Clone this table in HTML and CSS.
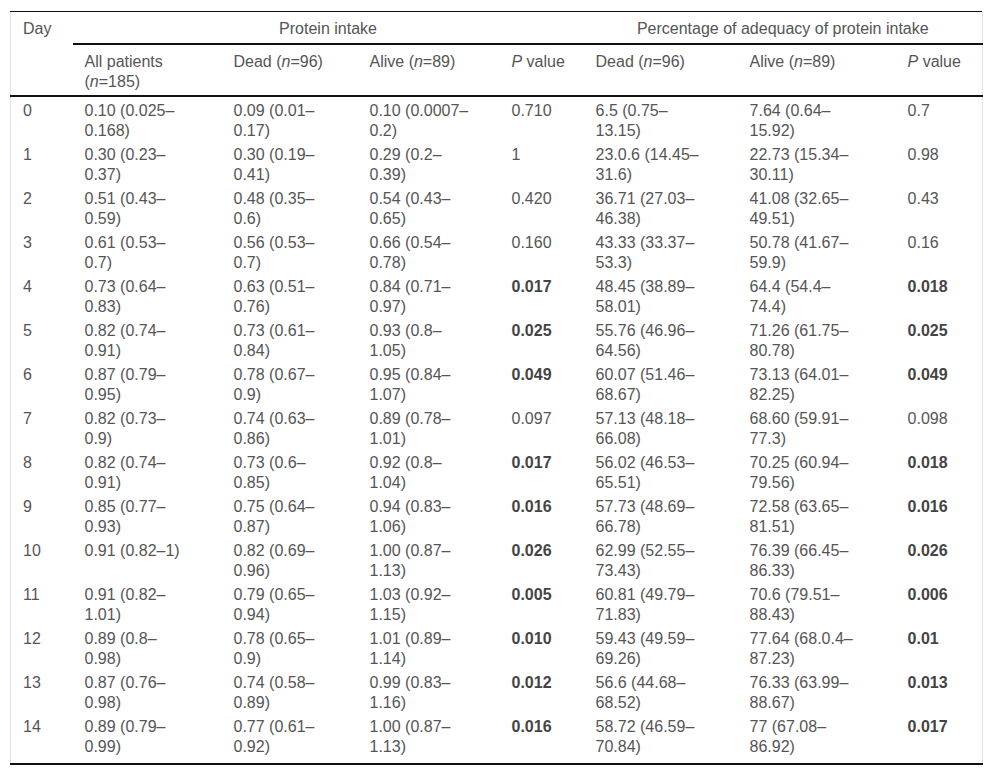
FILE: index.html
```html
<!DOCTYPE html>
<html>
<head>
<meta charset="utf-8">
<link rel="stylesheet" href="styles.css">
</head>
<body>
<div class="wrap">
<table class="tbl">
<colgroup>
<col class="c1"><col class="c2"><col class="c3"><col class="c4"><col class="c5"><col class="c6"><col class="c7"><col class="c8">
</colgroup>
<thead>
<tr class="h1">
<th rowspan="2" class="day">Day</th>
<th colspan="4" class="grp">Protein intake</th>
<th colspan="3" class="grp">Percentage of adequacy of protein intake</th>
</tr>
<tr class="h2">
<th><div class="v">All patients (<i>n</i>=185)</div></th>
<th><div class="v">Dead (<i>n</i>=96)</div></th>
<th><div class="v">Alive (<i>n</i>=89)</div></th>
<th><div class="v"><i>P</i> value</div></th>
<th><div class="v">Dead (<i>n</i>=96)</div></th>
<th><div class="v">Alive (<i>n</i>=89)</div></th>
<th><div class="v"><i>P</i> value</div></th>
</tr>
</thead>
<tbody>
<tr><td>0</td><td><div class="v">0.10 (0.025–0.168)</div></td><td><div class="v">0.09 (0.01–0.17)</div></td><td><div class="v">0.10 (0.0007–0.2)</div></td><td>0.710</td><td><div class="v">6.5 (0.75–13.15)</div></td><td><div class="v">7.64 (0.64–15.92)</div></td><td>0.7</td></tr>
<tr><td>1</td><td><div class="v">0.30 (0.23–0.37)</div></td><td><div class="v">0.30 (0.19–0.41)</div></td><td><div class="v">0.29 (0.2–0.39)</div></td><td>1</td><td><div class="v">23.0.6 (14.45–31.6)</div></td><td><div class="v">22.73 (15.34–30.11)</div></td><td>0.98</td></tr>
<tr><td>2</td><td><div class="v">0.51 (0.43–0.59)</div></td><td><div class="v">0.48 (0.35–0.6)</div></td><td><div class="v">0.54 (0.43–0.65)</div></td><td>0.420</td><td><div class="v">36.71 (27.03–46.38)</div></td><td><div class="v">41.08 (32.65–49.51)</div></td><td>0.43</td></tr>
<tr><td>3</td><td><div class="v">0.61 (0.53–0.7)</div></td><td><div class="v">0.56 (0.53–0.7)</div></td><td><div class="v">0.66 (0.54–0.78)</div></td><td>0.160</td><td><div class="v">43.33 (33.37–53.3)</div></td><td><div class="v">50.78 (41.67–59.9)</div></td><td>0.16</td></tr>
<tr><td>4</td><td><div class="v">0.73 (0.64–0.83)</div></td><td><div class="v">0.63 (0.51–0.76)</div></td><td><div class="v">0.84 (0.71–0.97)</div></td><td><b>0.017</b></td><td><div class="v">48.45 (38.89–58.01)</div></td><td><div class="v">64.4 (54.4–74.4)</div></td><td><b>0.018</b></td></tr>
<tr><td>5</td><td><div class="v">0.82 (0.74–0.91)</div></td><td><div class="v">0.73 (0.61–0.84)</div></td><td><div class="v">0.93 (0.8–1.05)</div></td><td><b>0.025</b></td><td><div class="v">55.76 (46.96–64.56)</div></td><td><div class="v">71.26 (61.75–80.78)</div></td><td><b>0.025</b></td></tr>
<tr><td>6</td><td><div class="v">0.87 (0.79–0.95)</div></td><td><div class="v">0.78 (0.67–0.9)</div></td><td><div class="v">0.95 (0.84–1.07)</div></td><td><b>0.049</b></td><td><div class="v">60.07 (51.46–68.67)</div></td><td><div class="v">73.13 (64.01–82.25)</div></td><td><b>0.049</b></td></tr>
<tr><td>7</td><td><div class="v">0.82 (0.73–0.9)</div></td><td><div class="v">0.74 (0.63–0.86)</div></td><td><div class="v">0.89 (0.78–1.01)</div></td><td>0.097</td><td><div class="v">57.13 (48.18–66.08)</div></td><td><div class="v">68.60 (59.91–77.3)</div></td><td>0.098</td></tr>
<tr><td>8</td><td><div class="v">0.82 (0.74–0.91)</div></td><td><div class="v">0.73 (0.6–0.85)</div></td><td><div class="v">0.92 (0.8–1.04)</div></td><td><b>0.017</b></td><td><div class="v">56.02 (46.53–65.51)</div></td><td><div class="v">70.25 (60.94–79.56)</div></td><td><b>0.018</b></td></tr>
<tr><td>9</td><td><div class="v">0.85 (0.77–0.93)</div></td><td><div class="v">0.75 (0.64–0.87)</div></td><td><div class="v">0.94 (0.83–1.06)</div></td><td><b>0.016</b></td><td><div class="v">57.73 (48.69–66.78)</div></td><td><div class="v">72.58 (63.65–81.51)</div></td><td><b>0.016</b></td></tr>
<tr><td>10</td><td><div class="v">0.91 (0.82–1)</div></td><td><div class="v">0.82 (0.69–0.96)</div></td><td><div class="v">1.00 (0.87–1.13)</div></td><td><b>0.026</b></td><td><div class="v">62.99 (52.55–73.43)</div></td><td><div class="v">76.39 (66.45–86.33)</div></td><td><b>0.026</b></td></tr>
<tr><td>11</td><td><div class="v">0.91 (0.82–1.01)</div></td><td><div class="v">0.79 (0.65–0.94)</div></td><td><div class="v">1.03 (0.92–1.15)</div></td><td><b>0.005</b></td><td><div class="v">60.81 (49.79–71.83)</div></td><td><div class="v">70.6 (79.51–88.43)</div></td><td><b>0.006</b></td></tr>
<tr><td>12</td><td><div class="v">0.89 (0.8–0.98)</div></td><td><div class="v">0.78 (0.65–0.9)</div></td><td><div class="v">1.01 (0.89–1.14)</div></td><td><b>0.010</b></td><td><div class="v">59.43 (49.59–69.26)</div></td><td><div class="v">77.64 (68.0.4–87.23)</div></td><td><b>0.01</b></td></tr>
<tr><td>13</td><td><div class="v">0.87 (0.76–0.98)</div></td><td><div class="v">0.74 (0.58–0.89)</div></td><td><div class="v">0.99 (0.83–1.16)</div></td><td><b>0.012</b></td><td><div class="v">56.6 (44.68–68.52)</div></td><td><div class="v">76.33 (63.99–88.67)</div></td><td><b>0.013</b></td></tr>
<tr><td>14</td><td><div class="v">0.89 (0.79–0.99)</div></td><td><div class="v">0.77 (0.61–0.92)</div></td><td><div class="v">1.00 (0.87–1.13)</div></td><td><b>0.016</b></td><td><div class="v">58.72 (46.59–70.84)</div></td><td><div class="v">77 (67.08–86.92)</div></td><td><b>0.017</b></td></tr>
</tbody>
</table>
</div>
</body>
</html>
```
FILE: styles.css
```css
html, body {
  margin: 0;
  padding: 0;
  background: #fff;
}
.wrap {
  padding: 11px 0 0 10px;
}
.tbl {
  width: 972px;
  table-layout: fixed;
  border-collapse: collapse;
  font-family: "Liberation Sans", Arial, sans-serif;
  font-size: 16px;
  line-height: 20px;
  color: #555;
  border-left: 1px solid #e2e2e2;
  border-right: 1px solid #e2e2e2;
  border-top: 1px solid #111;
  border-bottom: 2px solid #111;
}
.c1 { width: 62px; }
.c2 { width: 149px; }
.c3 { width: 136px; }
.c4 { width: 142px; }
.c5 { width: 84px; }
.c6 { width: 154px; }
.c7 { width: 158px; }
.c8 { width: 87px; }
.tbl th {
  font-weight: normal;
  text-align: left;
  vertical-align: top;
  padding: 7px 12px 3px 12px;
}
.h1 th {
  padding: 7px 12px 4px 12px;
}
.h1 .grp {
  text-align: center;
  border-bottom: 2px solid #111;
}
.h2 th {
  border-bottom: 2px solid #111;
  height: 40px;
}
.h1 .day {
  border-bottom: 2px solid #111;
}
.tbl td {
  vertical-align: top;
  padding: 2px 12px 2px 12px;
  height: 40px;
}
.tbl tbody tr:first-child td {
  padding-top: 4px;
}
.tbl tbody tr:last-child td {
  padding-bottom: 6px;
}
.v {
  max-width: 105px;
}
.tbl b {
  color: #444;
}
```
